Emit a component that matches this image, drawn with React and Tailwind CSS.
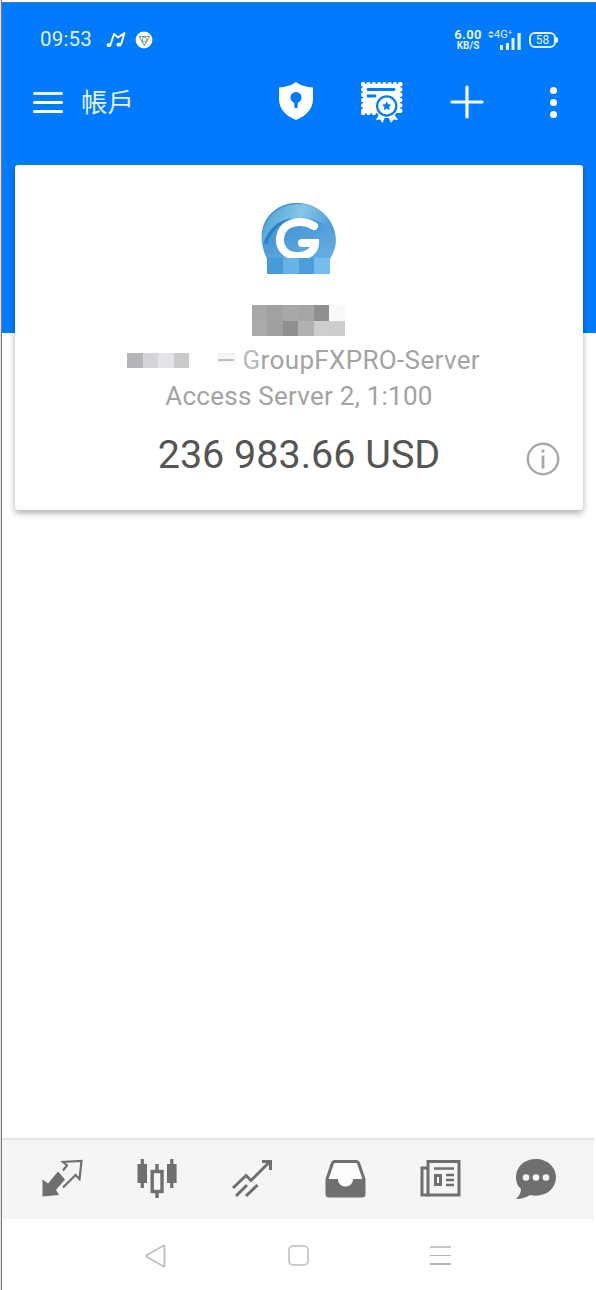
import { clsx } from 'clsx';

function MusicIcon() {
  return (
    <svg width="20" height="16" viewBox="0 0 20 16" fill="none" stroke="#fff" strokeWidth="1.900">
      <path d="M4.500 12.500 8 2l4 3.500L18.500 1 15 12.500" strokeLinejoin="round" />
      <ellipse cx="3" cy="13" rx="2.500" ry="1.900" fill="#fff" stroke="none" />
      <ellipse cx="13" cy="12.700" rx="2.600" ry="1.900" fill="#fff" stroke="none" />
    </svg>
  );
}

function BrowserIcon() {
  return (
    <svg width="18" height="18" viewBox="0 0 18 18">
      <circle cx="9" cy="9" r="8.400" fill="#fff" />
      <path d="M4 5.500h10.500L9.500 14.500z" stroke="#8b959c" strokeWidth="1.100" fill="#fff" strokeLinejoin="round" />
      <circle cx="9.300" cy="8.600" r="2.200" fill="#fff" stroke="#8b959c" strokeWidth="1" />
    </svg>
  );
}

function SignalBars() {
  return (
    <svg width="22" height="17" viewBox="0 0 22 17" fill="#e4f1ff">
      <rect x="0" y="12" width="3" height="5" />
      <rect x="6" y="10" width="3" height="7" />
      <rect x="11.500" y="5" width="3" height="12" />
      <rect x="17.500" y="0" width="3.200" height="17" />
    </svg>
  );
}

function ShieldIcon() {
  return (
    <svg className="mb-[2px]" width="34" height="38" viewBox="0 0 34 38">
      <path d="M17 0C12 4 6 5 0 5.500V17c0 10 7 17 17 21 10-4 17-11 17-21V5.500C28 5 22 4 17 0z" fill="#fff" />
      <circle cx="17" cy="15.500" r="5.500" fill="#007bff" />
      <path d="M17 17v7.500" stroke="#007bff" strokeWidth="3.400" strokeLinecap="round" />
    </svg>
  );
}

function CertificateIcon() {
  return (
    <svg width="42" height="41" viewBox="0 0 42 41">
      <rect x="2" y="2" width="37" height="29" fill="#fff" />
      <g fill="none" stroke="#fff" strokeWidth="4.400" strokeLinecap="round" strokeDasharray="0 5.300">
        <path d="M2.200 2.200h38" />
        <path d="M2.200 2.200v30" />
        <path d="M39.300 2.200v30" />
        <path d="M2.200 31h14" />
      </g>
      <path d="M7 7.500h26M7 14h7" stroke="#007bff" strokeWidth="2.800" strokeLinecap="round" />
      <path d="m18 32-3 6 4-.5 2.500 3.500 3-7zM33 32l4 6-4.500-.5-2.500 3.500-3-7z" fill="#fff" />
      <circle cx="25.700" cy="24" r="12" fill="#fff" />
      <circle cx="25.700" cy="24" r="9.600" fill="#fff" stroke="#007bff" strokeWidth="2.200" />
      <path d="m25.700 19.300 1.400 3 3.300.4-2.400 2.300.6 3.200-2.900-1.600-2.900 1.600.6-3.200-2.400-2.300 3.300-.4z" fill="#007bff" />
    </svg>
  );
}

function BrandLogo() {
  return (
    <svg width="76" height="71" viewBox="0 0 76 71">
      <defs>
        <linearGradient id="orb" x1="0" y1="0" x2="0.600" y2="1">
          <stop offset="0" stopColor="#3f8fd0" />
          <stop offset="0.550" stopColor="#4a98d8" />
          <stop offset="1" stopColor="#62abe0" />
        </linearGradient>
        <linearGradient id="rim" x1="0" y1="0.300" x2="1" y2="0.500">
          <stop offset="0" stopColor="#4fa3d6" />
          <stop offset="0.500" stopColor="#86c7e8" />
          <stop offset="1" stopColor="#4b99da" />
        </linearGradient>
      </defs>
      <path d="M6 56C-3 37-1 18 14 7c14-11 36-9 49 4 13 14 16 29 6 45z" fill="url(#orb)" />
      <path d="M1 42C-1 18 16 1 38 1c18 0 34 13 36 31-9-13-25-20-42-16C17 19 6 28 1 42z" fill="url(#rim)" />
      <path d="M3 40c4-14 14-23 29-25-13 5-22 13-26 26z" fill="#2f7cc6" />
      <path d="M53 23c-12-7-32-5-34 12-1 10 6 17 15 18 11 1 20-4 20-13H41" stroke="#fff" strokeWidth="8" fill="none" strokeLinecap="round" />
      <rect x="6" y="55" width="16" height="16" fill="#459bd6" />
      <rect x="22" y="55" width="16" height="16" fill="#66b3e4" />
      <rect x="38" y="55" width="15" height="16" fill="#4b9ddc" />
      <rect x="53" y="55" width="16" height="16" fill="#76bcec" />
    </svg>
  );
}

function InfoIcon() {
  return (
    <svg width="34" height="34" viewBox="0 0 34 34" fill="none" stroke="#a8a8a8">
      <circle cx="17" cy="17" r="15.200" strokeWidth="2.400" />
      <path d="M17 13.500v13M17 7.500v3" strokeWidth="2.800" />
    </svg>
  );
}

// Bottom tab icons, all drawn on the same 42px grid
const tabs = [
  {
    id: 'trade',
    icon: (
      <>
        <path d="M1.500 20.500 7 24.500 17 12.500l7 8-9 10.500 3 5-16.500 1.500z" fill="#6f6f6f" />
        <path d="m22 11.500 4-5-4-3.500L40.500 2l-2 18-4-4L22 28.500" fill="none" stroke="#6f6f6f" strokeWidth="2.200" />
      </>
    ),
  },
  {
    id: 'charts',
    icon: (
      <>
        <path d="M1.500 5h3.200V0h3.200v5H11v19H7.900v5H4.700v-5H1.500zM31 5h3.200V0h3.200v5h3.200v19h-3.200v5h-3.200v-5H31z" fill="#6f6f6f" />
        <path d="M21 5v7M21 33v6" stroke="#6f6f6f" strokeWidth="3.400" />
        <rect x="16.200" y="12.500" width="9.800" height="20" fill="none" stroke="#6f6f6f" strokeWidth="3.400" />
      </>
    ),
  },
  {
    id: 'signals',
    icon: (
      <g fill="none" stroke="#6f6f6f" strokeWidth="3">
        <path d="M2 29 15 16.500l5 5L38.500 3" />
        <path d="M31 2.500h8.500V11" />
        <path d="m5 37 11-11M15 37l11.500-11" />
      </g>
    ),
  },
  {
    id: 'inbox',
    icon: (
      <>
        <path d="M2 20 7.500 4q.5-1.500 2-1.500h22q1.500 0 2 1.500L39 20v15q0 2-2 2H4q-2 0-2-2z" fill="#fdfdfd" stroke="#6f6f6f" strokeWidth="3" />
        <path d="M2 20h11c0 10 15 10 15 0h11v17H2z" fill="#6f6f6f" />
      </>
    ),
  },
  {
    id: 'news',
    icon: (
      <g fill="none" stroke="#6f6f6f" strokeWidth="3">
        <path d="M8 2.500h31V36H8z" />
        <path d="M8 9H2v27h6" />
        <path d="M14 9.500h20M26 16h8M26 21h8M26 26h8" strokeWidth="2.600" />
        <path d="M15.500 16.500h5v9h-5z" strokeWidth="3" />
      </g>
    ),
  },
  {
    id: 'chat',
    icon: (
      <>
        <path d="M21 0C9 0 1 8 1 18c0 6 2 9 5 12 0 4-2 7-5 10 6 0 11-2 14-4 14 3 26-5 26-18C41 8 32 0 21 0z" fill="#6f6f6f" />
        <circle cx="11" cy="18.500" r="3.300" fill="#f5f5f5" />
        <circle cx="21" cy="18.500" r="3.300" fill="#f5f5f5" />
        <circle cx="31" cy="18.500" r="3.300" fill="#f5f5f5" />
      </>
    ),
  },
];

// Censored values are shown as rows of flat blocks
const nameBlocks = [
  'bg-[#a8a8a9]', 'bg-[#a1a1a2]', 'bg-[#a9a9aa]', 'bg-[#a6a6a7]', 'bg-[#8f8f90]', 'bg-[#f9f9fa]',
  'bg-[#ababac]', 'bg-[#a0a0a2]', 'bg-[#8f8f91]', 'bg-[#b1b1b3]', 'bg-[#cececf]', 'bg-[#cdcdce]',
];
const loginBlocks = ['bg-[#b5b5b7]', 'bg-[#d5d5d9]', 'bg-[#e4e4e8]', 'bg-[#cbcbcd]'];

function StatusBar() {
  return (
    <div className="flex h-[73px] items-center pr-[38px] pl-[38px] text-white">
      <span className="w-[66px] text-[20.5px] leading-none tracking-[0.2px] text-[#e4f1ff]">09:53</span>
      <MusicIcon />
      <span className="ml-[9px]">
        <BrowserIcon />
      </span>
      <div className="mr-[6px] ml-auto flex w-[28px] flex-col items-center font-bold text-[#e4f1ff]">
        <span className="text-[13px] leading-[12px] tracking-[0.3px]">6.00</span>
        <span className="text-[10px] leading-[10px]">KB/S</span>
      </div>
      <div className="relative flex h-5 w-[34px] items-end justify-end">
        <span className="absolute top-0 left-0 flex items-center text-[11px] leading-[10px] text-[#e4f1ff]">
          <svg width="6" height="9" viewBox="0 0 6 9" fill="#e4f1ff">
            <path d="M0 3.500 3 1l3 2.500zM0 5.500h6L3 8z" />
          </svg>
          4G⁺
        </span>
        <SignalBars />
      </div>
      <div className="ml-[7px] flex items-center">
        <span className="flex h-4 w-[27px] items-center justify-center rounded-[6px] border-2 border-[#e4f1ff] text-[12px] leading-none text-[#e4f1ff]">
          58
        </span>
        <span className="h-[6px] w-[2px] rounded-r bg-[#e4f1ff]" />
      </div>
    </div>
  );
}

function Toolbar() {
  return (
    <div className="flex h-[52px] items-center pl-[31px] text-white">
      <div className="flex w-[30px] flex-col gap-[6px]">
        <span className="h-[3px] rounded-full bg-[#e4f1ff]" />
        <span className="h-[3px] rounded-full bg-white" />
        <span className="h-[3px] rounded-full bg-white" />
      </div>
      <h1 className="mb-[2px] ml-[18px] w-[198px] font-['Noto_Sans_CJK_TC',sans-serif] text-[26.5px] leading-none text-[#e4f1ff]">帳戶</h1>
      <ShieldIcon />
      <span className="ml-[48px]">
        <CertificateIcon />
      </span>
      <svg className="ml-[47px]" width="34" height="34" viewBox="0 0 34 34" stroke="#fff" strokeWidth="3.200">
        <path d="M17 2v30M2 17h30" strokeLinecap="round" />
      </svg>
      <div className="ml-[66px] flex flex-col gap-[5px]">
        <span className="size-[7px] rounded-full bg-white" />
        <span className="size-[7px] rounded-full bg-white" />
        <span className="size-[7px] rounded-full bg-white" />
      </div>
    </div>
  );
}

function AccountCard() {
  return (
    <section className="relative mr-[13px] ml-[13px] flex h-[345px] flex-col items-center rounded-[3px] bg-white pt-[38px] shadow-[0_3px_6px_rgba(0,0,0,0.32)]">
      <BrandLogo />
      <div className="mt-[31px] mr-[2px] grid w-[93px] grid-cols-6">
        {nameBlocks.map((shade, i) => (
          <span key={i} className={clsx('h-[15.5px]', shade)} />
        ))}
      </div>
      <div className="mt-[6px] flex h-9 w-[362px] items-center text-[26px] leading-9 tracking-[0.35px] text-[#a3a3a3]">
        <div className="ml-[9px] grid h-[15px] w-[62px] grid-cols-4">
          {loginBlocks.map((shade, i) => (
            <span key={i} className={shade} />
          ))}
        </div>
        <div className="ml-[29px] flex h-[15px] w-[18px] items-center bg-gradient-to-b from-[#f0f0f0] to-white">
          <span className="h-[2px] w-4 bg-[#bdbdbd]" />
        </div>
        <span className="ml-auto whitespace-nowrap">
          <span className="text-[#bababa]">G</span>roupFXPRO-Server
        </span>
      </div>
      <p className="h-9 text-[26px] leading-9 tracking-[0.25px] whitespace-nowrap text-[#a3a3a3]">Access Server 2, 1:100</p>
      <p className="mt-[17px] text-[39.5px] leading-[48px] whitespace-nowrap text-[#555]">236 983.66 USD</p>
      <span className="absolute right-[23px] bottom-[34px]">
        <InfoIcon />
      </span>
    </section>
  );
}

function TabBar() {
  return (
    <nav className="mr-[2px] flex h-[81px] items-center justify-between border-t-2 border-[#e4e4e4] bg-[#f5f5f5] pr-[37px] pb-px pl-[39px]">
      {tabs.map((tab) => (
        <svg key={tab.id} width="42" height="40" viewBox="0 0 42 40">
          {tab.icon}
        </svg>
      ))}
    </nav>
  );
}

function SystemNav() {
  return (
    <div className="flex h-[71px] items-center pt-[2px] pl-[142px]">
      <svg width="22" height="24" viewBox="0 0 22 24" fill="none" stroke="#bcbcbc" strokeWidth="1.800">
        <path d="M20.500 2.500v19Q20.500 23 19 22L3 13q-1.500-1 0-2L19 2q1.500-1 1.500.5z" />
      </svg>
      <span className="ml-[122px] size-[21px] rounded-[5px] border-2 border-[#cbcbcb]" />
      <div className="ml-[121px] flex w-[21px] flex-col gap-[7px]">
        <span className="h-[1.5px] bg-[#c6c6c6]" />
        <span className="h-[1.5px] bg-[#b5b5b5]" />
        <span className="h-[1.5px] bg-[#b5b5b5]" />
      </div>
    </div>
  );
}

export default function App() {
  return (
    <div className="h-[1290px] w-[596px] bg-[#e2e2e2] font-[Roboto,sans-serif]">
      <div className="ml-px flex h-full flex-col border-l border-[#777] bg-white pt-[2px]">
        <header className="h-[331px] border-t border-[#4a7fb5] bg-[#007bff]">
          <StatusBar />
          <Toolbar />
        </header>
        <main className="-mt-[168px] flex-1">
          <AccountCard />
        </main>
        <TabBar />
        <SystemNav />
      </div>
    </div>
  );
}
